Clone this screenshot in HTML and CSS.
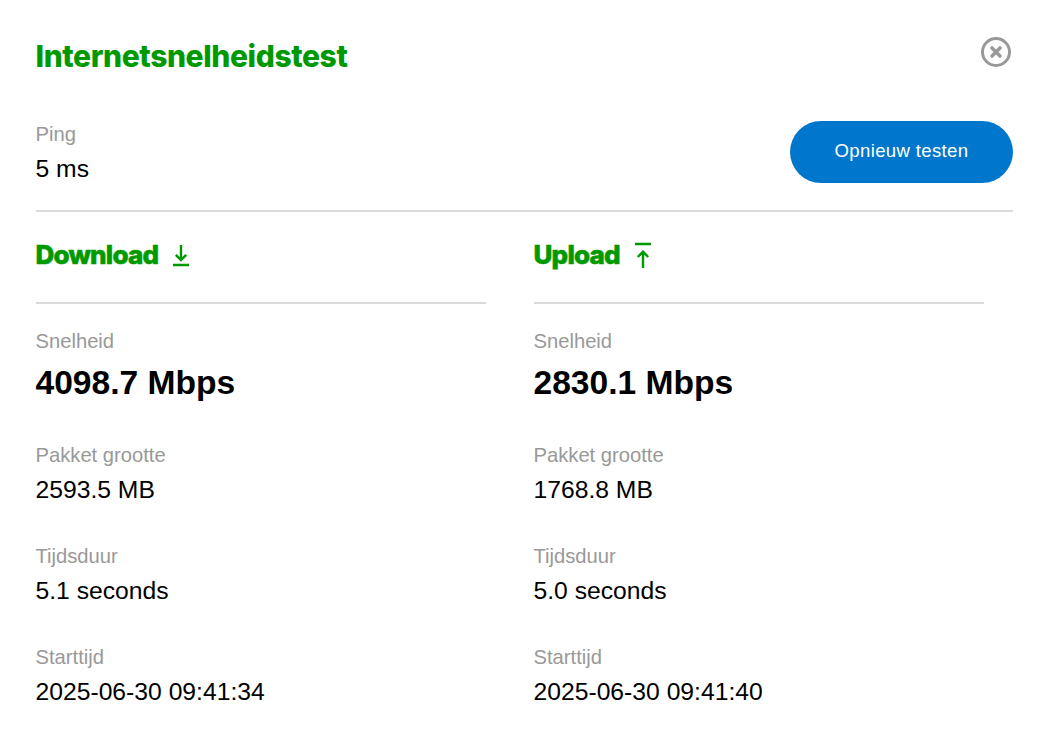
FILE: index.html
```html
<!DOCTYPE html>
<html lang="nl">
<head>
<meta charset="utf-8">
<title>Internetsnelheidstest</title>
<link rel="stylesheet" href="styles.css">
</head>
<body>
<main class="dialog">
  <header class="top">
    <h1 class="title">Internetsnelheidstest</h1>
    <button class="close" aria-label="Sluiten">
      <svg width="32" height="32" viewBox="0 0 32 32" fill="none" stroke="#999" stroke-width="3"><circle cx="16" cy="16" r="13.5"/><path d="M12 12l8 8M20 12l-8 8" stroke-width="3.6" stroke-linecap="round"/></svg>
    </button>
  </header>
  <section class="ping">
    <div>
      <div class="label">Ping</div>
      <div class="value">5 ms</div>
    </div>
    <button class="retest">Opnieuw testen</button>
  </section>
  <div class="columns">
    <section class="col">
      <h2 class="head"><span class="head-text">Download</span>
        <svg class="ico" width="18" height="26" viewBox="0 0 18 26" fill="none" stroke="#009900" stroke-width="2.4"><path d="M9 3v15M3.800 12.800L9 18l5.200-5.200M1 23h16"/></svg>
      </h2>
      <div class="stat">
        <div class="label">Snelheid</div>
        <div class="big">4098.7 Mbps</div>
      </div>
      <div class="stat">
        <div class="label">Pakket grootte</div>
        <div class="value">2593.5 MB</div>
      </div>
      <div class="stat">
        <div class="label">Tijdsduur</div>
        <div class="value">5.1 seconds</div>
      </div>
      <div class="stat">
        <div class="label">Starttijd</div>
        <div class="value">2025-06-30 09:41:34</div>
      </div>
    </section>
    <section class="col">
      <h2 class="head"><span class="head-text">Upload</span>
        <svg class="ico" width="18" height="26" viewBox="0 0 18 26" fill="none" stroke="#009900" stroke-width="2.400"><path d="M1 2h16M9 26V10M3.800 15L9 9.800l5.200 5.200"/></svg>
      </h2>
      <div class="stat">
        <div class="label">Snelheid</div>
        <div class="big">2830.1 Mbps</div>
      </div>
      <div class="stat">
        <div class="label">Pakket grootte</div>
        <div class="value">1768.8 MB</div>
      </div>
      <div class="stat">
        <div class="label">Tijdsduur</div>
        <div class="value">5.0 seconds</div>
      </div>
      <div class="stat">
        <div class="label">Starttijd</div>
        <div class="value">2025-06-30 09:41:40</div>
      </div>
    </section>
  </div>
</main>
</body>
</html>
```
FILE: styles.css
```css
* { box-sizing: border-box; }
html, body { margin: 0; background: #fff; }
body { font-family: "Liberation Sans", Arial, sans-serif; color: #000; }
.dialog { width: 1045px; height: 740px; padding: 36px 32px 0 35.5px; overflow: hidden; }
.top { display: flex; justify-content: space-between; align-items: flex-start; height: 85px; }
.title { margin: 0; font: 800 30px/40px Inter, sans-serif; letter-spacing: -0.4px; color: #009900; }
.close { border: 0; background: none; padding: 0; margin: 0 1px 0 0; height: 32px; display: block; }
.close svg { display: block; }
.ping { display: flex; justify-content: space-between; align-items: flex-start; height: 91px; border-bottom: 2px solid #d9d9d9; }
.label { font-size: 20.2px; line-height: 26px; color: #999; }
.value { font-size: 24.7px; line-height: 30px; margin-top: 7px; }
.big { font-size: 33.6px; line-height: 40px; font-weight: 700; margin-top: 9px; padding-bottom: 1px; }
.retest { width: 223px; height: 62px; border: 0; border-radius: 31px; padding-bottom: 4px; background: #0077cc; color: #fff; font: 18.6px "Liberation Sans", sans-serif; letter-spacing: 0.33px; }
.columns { display: grid; grid-template-columns: 450px 450px; column-gap: 48px; }
.head { margin: 0 0 24px; height: 92px; display: flex; align-items: center; gap: 14px; padding-bottom: 4px; font: 800 26px/36px Inter, sans-serif; color: #009900; border-bottom: 2px solid #d9d9d9; }
.head-text { -webkit-text-stroke: 0.6px #009900; letter-spacing: -0.8px; }
.ico { display: block; }
.stat { margin-bottom: 38px; }
```
